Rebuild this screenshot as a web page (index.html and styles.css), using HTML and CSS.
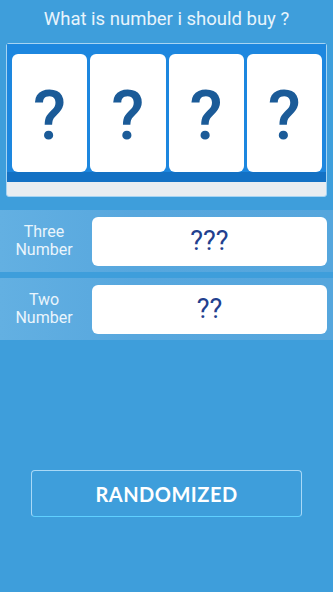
FILE: index.html
```html
<!DOCTYPE html>
<html>
<head>
<meta charset="utf-8">
<link rel="stylesheet" href="styles.css">
</head>
<body>
<div class="screen">
  <div class="title">What is number i should buy ?</div>
  <div class="frame">
    <div class="board">
      <div class="card">?</div>
      <div class="card">?</div>
      <div class="card">?</div>
      <div class="card">?</div>
    </div>
  </div>
  <div class="rows">
    <div class="row">
      <div class="label">Three<br>Number</div>
      <div class="box">???</div>
    </div>
    <div class="row">
      <div class="label">Two<br>Number</div>
      <div class="box">??</div>
    </div>
  </div>
  <div class="btn">RANDOMIZED</div>
</div>
</body>
</html>
```
FILE: styles.css
```css
html, body {
  margin: 0;
  padding: 0;
  background: #3e9edb;
}
.screen {
  width: 333px;
  height: 592px;
  font-family: Roboto, "Noto Sans", sans-serif;
  display: flex;
  flex-direction: column;
  overflow: hidden;
}
.title {
  height: 43px;
  box-sizing: border-box;
  padding-top: 8px;
  line-height: 22px;
  text-align: center;
  color: #e8f4fc;
  font-size: 18.5px;
}
.frame {
  margin: 0 6px;
  border: 1.5px solid #a6d4f3;
  border-radius: 3px;
  background: #e8edf1;
  height: 154px;
  box-sizing: border-box;
}
.board {
  background: #1d87df;
  border-bottom: 10px solid #1371c4;
  padding: 10px 4px 0 5px;
  display: grid;
  grid-template-columns: repeat(4, 1fr);
  gap: 3px;
}
.card {
  background: #fff;
  border-radius: 6px;
  height: 118px;
  box-sizing: border-box;
  padding-top: 6px;
  display: flex;
  align-items: center;
  justify-content: center;
  color: #1b5b98;
  font-size: 68px;
  font-weight: 500;
  line-height: 1;
}
.rows {
  margin-top: 13px;
  display: flex;
  flex-direction: column;
  gap: 6px;
}
.row {
  height: 62px;
  display: flex;
  align-items: center;
  background: linear-gradient(to right, #63b0e2, #57a7de 40%, #55a6dd);
}
.label {
  width: 88px;
  margin-right: 4px;
  text-align: center;
  color: #eaf5fc;
  font-size: 16px;
  line-height: 18px;
}
.box {
  flex: 1;
  margin-right: 6px;
  height: 49px;
  background: #fff;
  border-radius: 6px;
  display: flex;
  align-items: center;
  justify-content: center;
  color: #22408e;
  font-size: 27px;
}
.btn {
  margin: 130px 31px 0 31px;
  height: 47px;
  box-sizing: border-box;
  border: 1px solid #a9d9f7;
  border-bottom-color: #5fd0ff;
  border-radius: 4px;
  display: flex;
  align-items: center;
  justify-content: center;
  color: #fff;
  font-family: Lato, "DejaVu Sans", sans-serif;
  font-weight: bold;
  font-size: 20px;
  letter-spacing: 0.5px;
}
```
